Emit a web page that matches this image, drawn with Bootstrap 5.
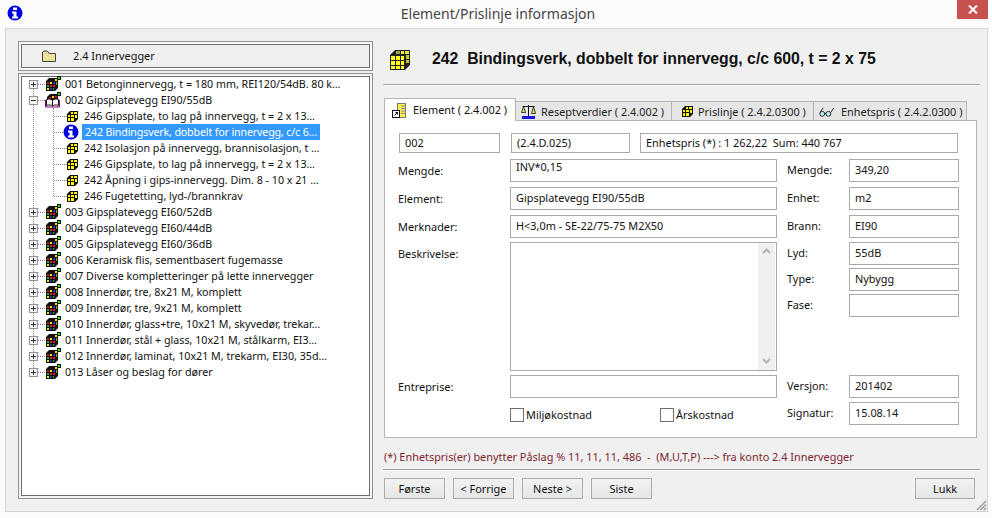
<!DOCTYPE html>
<html lang="no">
<head>
    <meta charset="UTF-8">
    <title>Element/Prislinje informasjon</title>
    <link href="https://cdn.jsdelivr.net/npm/bootstrap@5.3.0/dist/css/bootstrap.min.css" rel="stylesheet">
    <style>
        html, body { height: 518px; overflow: hidden; }
        body { background: #fcfcfc; font-family: "Noto Sans", "DejaVu Sans", sans-serif; font-size: 10.9px; line-height: 16px; color: #111; }

        /* title bar */
        .titlebar { height: 28px; padding-left: 7px; }
        .titlebar-icon { margin-top: -2px; }
        .titlebar-text { flex: 1; text-align: center; font-size: 14px; color: #444; padding-left: 16px; }
        .close-x { width: 31px; height: 19px; background: #c75050; margin-right: 4px; align-self: flex-start; }

        .window-body { margin: 0 4px 0 5px; height: 484px; background: #f0f0f0; border: 1px solid #d4d4d4; padding: 12px 6px 0 12px; }

        /* left column */
        .left-col { width: 355px; margin-right: 10px; }
        .group-head { height: 30px; border: 1px solid #909090; box-shadow: inset 0 0 0 2px #fafafa, inset 0 0 0 3px #6e6e6e; padding-left: 23px; margin-bottom: 2px; }
        .group-head span { margin-left: 17px; }
        .tree-box { height: 426px; background: #fff; border: 1px solid #909090; box-shadow: inset 0 0 0 2px #f4f4f4, inset 0 0 0 3px #6e6e6e; padding: 2px 0 0 10px; font-size: 10.7px; }
        .tree-list, .tree-sub { list-style: none; margin: 0; padding: 0; position: relative; }
        .tree-list::before { content: ""; position: absolute; left: 4px; top: 8px; height: 288px; border-left: 1px dotted #888; }
        .tree-sub::before { content: ""; position: absolute; left: 24px; top: 0; height: 88px; border-left: 1px dotted #888; }
        .tree-row { height: 16px; white-space: nowrap; }
        .expander { width: 9px; height: 9px; background: #f4f4f4; border: 1px solid #919191; position: relative; z-index: 1; flex: none; }
        .expander::before { content: ""; position: absolute; left: 1px; top: 3px; width: 5px; height: 1px; background: #333; }
        .expander.closed::after { content: ""; position: absolute; left: 3px; top: 1px; width: 1px; height: 5px; background: #333; }
        .connector { width: 7px; border-top: 1px dotted #888; flex: none; }
        .connector.sub { width: 13px; margin-left: 25px; }
        .node-icon { width: 17px; height: 16px; flex: none; }
        .sub-icon { width: 11px; height: 11px; flex: none; margin-right: 6px; }
        .info-icon { width: 16px; height: 16px; flex: none; margin: 0 3px 0 -4px; position: relative; z-index: 1; }
        .node-label { margin-left: 3px; }
        .selected-label { background: #3399ff; color: #fff; padding-left: 3px; width: 238px; letter-spacing: -0.16px; }

        /* right column */
        .right-col { width: 597px; }
        .head-icon { width: 20px; height: 20px; margin: 0 22px 0 7px; flex: none; }
        .head-title { height: 43px; padding-bottom: 6px; }
        .head-title h1 { font-family: "Liberation Sans", Arial, sans-serif; font-weight: 700; font-size: 15.8px; margin: 0; color: #111; white-space: pre; }
        .rule { border-top: 1px solid #a0a0a0; border-bottom: 1px solid #fff; height: 2px; }

        .tab-strip { margin: 11px 0 0 1px; border: 0; height: 23px; align-items: flex-end; flex-wrap: nowrap; }
        .tab-strip .nav-link { height: 19px; padding: 1px 0 0 5px; border: 1px solid #b4b4b4; border-bottom: 0; border-radius: 0; background: #e6e6e6; color: #222; font-size: 10.9px; line-height: 18px; white-space: pre; display: flex; align-items: center; margin: 0 -1px 0 0; }
        .tab-strip .nav-link.active { height: 23px; padding-top: 0; background: #fff; color: #111; position: relative; z-index: 2; margin-bottom: -1px; border-color: #b4b4b4; }
        .tab-icon { width: 15px; height: 15px; margin-right: 6px; flex: none; }
        .tab-cube { width: 11px; height: 11px; margin-right: 5px; flex: none; }
        .tab-one { width: 132px; padding-left: 7px !important; }
        .tab-two { width: 157px; }
        .tab-two .tab-icon { margin-right: 5px; }
        .tab-three { width: 143px; padding-left: 10px !important; }
        .tab-four { width: 154px; }
        .tab-four .tab-icon { margin-right: 7px; }

        .tab-body { width: 593px; height: 318px; margin-left: 1px; background: #fff; border: 1px solid #b4b4b4; padding: 12px 16px 0 14px; }
        .field { border: 1px solid #a9a9a9; background: #fff; border-radius: 0; padding: 0 0 0 5px; height: 23px; font-size: 10.9px; line-height: 20px; color: #111; }
        .memo-line { line-height: 13px; }
        .top-row { display: flex; margin-bottom: 5px; height: 21px; }
        .top-row .field { height: 20px; line-height: 18px; }
        .top-one { width: 101px; margin-right: 11px; }
        .top-two { width: 119px; margin-right: 10px; }
        .top-three { width: 318px; }

        .form-area { display: grid; grid-template-columns: 111px 267px 10px 62px 110px; grid-auto-rows: min-content; row-gap: 5px; }
        .form-label-text { margin: 0; padding-top: 3px; white-space: nowrap; }
        .left-label { margin-left: -1px; padding-top: 4px; }
        .lift { margin-top: -1px; }
        .desc-field { height: 129px; display: flex; justify-content: flex-end; padding: 0; }
        .fake-scroll { width: 17px; margin: 0 1px 0 0; background: #f0f0f0; display: flex; flex-direction: column; justify-content: space-between; align-items: center; padding: 5px 0 6px; }
        .side-stack { display: flex; flex-direction: column; gap: 3px; }
        .side-stack .side-cell { height: 23px; margin: 0; }
        .check-line { padding-top: 2px; }
        .check-text { width: 134px; }
        .form-check-input[type=checkbox].check-box { width: 14px; height: 14px; border: 1px solid #707070; background: #fff; border-radius: 0; margin: 0 2px 0 0; flex: none; }

        .note-text { color: #7f1f2f; margin: 11px 0 4px 1px; height: 16px; }
        .foot-row { margin: 7px 5px 0 1px; gap: 8px; }
        .win-btn { width: 61px; height: 21px; padding: 0; font-size: 10.9px; line-height: 18px; border: 1px solid #adadad; border-radius: 0; background: linear-gradient(#f2f2f2, #e6e6e6); color: #111; }
        .close-btn { width: 60px; }
        .grip { position: absolute; right: 5px; bottom: 7px; width: 11px; height: 11px; }
    </style>
</head>
<body>
    <svg width="0" height="0" class="position-absolute">
        <defs>
            <symbol id="cube" viewBox="0 0 11 11">
                <path d="M0 3 L3 0 H11 V8 L8 11 H0 Z" fill="#111"/>
                <path d="M1 4h2v2H1zM4 4h3v2H4zM1 7h2v3H1zM4 7h3v3H4z" fill="#ffff00"/>
                <path d="M4 1h2v2H4zM7 1h3v2H7zM8 4h2v3H8z" fill="#ffff00"/>
            </symbol>
            <symbol id="bigcube" viewBox="0 0 20 20">
                <path d="M0 5 L5 0 H20 V15 L15 20 H0 Z" fill="#222"/>
                <path d="M6 1h4v3H6z" fill="#a0a040"/>
                <path d="M11 1h3v3h-3zM15 1h4v3h-4z" fill="#e8e830"/>
                <path d="M1 6h4v4H1zM6 6h4v4H6zM11 6h3v4h-3zM1 11h4v4H1zM6 11h4v4H6zM11 11h3v4h-3zM1 16h4v3H1zM6 16h4v3H6zM11 16h3v3h-3z" fill="#ffff20"/>
                <path d="M16 5h3v4h-3zM16 10h3v3h-3z" fill="#c8c828"/>
            </symbol>
            <symbol id="colorcube" viewBox="0 0 17 16">
                <path d="M1 5 L4 2 H13 V12 L10 15 H1 Z" fill="#111"/>
                <path d="M2 6h2v2H2zM8 9h2v2H8z" fill="#e01010"/>
                <path d="M5 6h2v2H5zM2 12h2v2H2zM10 3h2v2h-2z" fill="#ffe000"/>
                <path d="M2 9h2v2H2zM8 12h1v2H8z" fill="#10b010"/>
                <path d="M5 9h2v2H5z" fill="#e01010"/>
                <path d="M5 12h2v2H5zM8 6h2v2H8z" fill="#1030d0"/>
                <path d="M11 6h1v3h-1z" fill="#a0a000"/>
                <rect x="12" y="0" width="4" height="4" fill="#111"/><rect x="13" y="1" width="2" height="2" fill="#20e020"/>
            </symbol>
            <symbol id="bookcube" viewBox="0 0 17 16">
                <path d="M2 5 L5 2 H13 V9 H2 Z" fill="#111"/>
                <path d="M4 5h2v2H4z" fill="#e01010"/><path d="M7 4h2v2H7z" fill="#ffe000"/><path d="M10 4h2v2h-2z" fill="#e01010"/>
                <rect x="12" y="0" width="4" height="4" fill="#111"/><rect x="13" y="1" width="2" height="2" fill="#20e020"/>
                <path d="M1.500 7.500C4 6.500 6 7 7.500 8.500V14C6 12.800 4 12.500 1.500 13.500Z" fill="#fff" stroke="#111"/>
                <path d="M13.500 7.500C11 6.500 9 7 7.500 8.500V14C9 12.800 11 12.500 13.500 13.500Z" fill="#fff" stroke="#111"/>
                <path d="M0.500 8V15H14.500V8" fill="none" stroke="#800080"/>
            </symbol>
            <symbol id="info" viewBox="0 0 16 16">
                <circle cx="8" cy="8" r="7.500" fill="#0000e0"/>
                <path d="M6 2.500h4V5H6zM5 6.500h4.500v5H11V13.500H5v-2h1.500V8.500H5z" fill="#fff"/>
            </symbol>
            <symbol id="folder" viewBox="0 0 14 12">
                <path d="M0.500 2V11.500H13.500V3.500H7L5.500 1H2Z" fill="#ece39a" stroke="#444"/>
            </symbol>
            <symbol id="doc" viewBox="0 0 15 15">
                <rect x="5.500" y="0.500" width="8" height="14" fill="#ffef50" stroke="#777"/>
                <path d="M9 3h4M9 5.500h4M9 8h4M9 10.500h4" stroke="#888"/>
                <rect x="0.500" y="7.500" width="7" height="7" fill="#fff" stroke="#111"/>
                <path d="M2.500 12.500L5.500 9.500M3.500 9.500h2v2" stroke="#111" fill="none"/>
            </symbol>
            <symbol id="scale" viewBox="0 0 15 15">
                <path d="M7.500 1V12M1.500 2.500H13.500" stroke="#111" fill="none"/>
                <path d="M2.500 2.500L0.500 8.500H4.500ZM12.500 2.500L10.500 9.500H14.500Z" fill="#e6e85a" stroke="#111" stroke-width="0.800"/>
                <path d="M1 12h13v3H1z" fill="#1a1ae0"/>
            </symbol>
            <symbol id="glasses" viewBox="0 0 16 15">
                <circle cx="3.500" cy="10" r="2.600" fill="#bfeff0" stroke="#222"/>
                <circle cx="10" cy="10" r="2.600" fill="#bfeff0" stroke="#222"/>
                <path d="M6 9.500H7.500M1 8.500L4.500 3.500M12.500 8.500L15.500 4" stroke="#222" fill="none"/>
            </symbol>
        </defs>
    </svg>

    <div class="titlebar d-flex align-items-center">
        <svg width="16" height="16" class="titlebar-icon"><use href="#info"/></svg>
        <div class="titlebar-text">Element/Prislinje informasjon</div>
        <div class="close-x d-flex align-items-center justify-content-center">
            <svg width="10" height="9" viewBox="0 0 10 9"><path d="M1 0.500L9 8.500M9 0.500L1 8.500" stroke="#fff" stroke-width="2"/></svg>
        </div>
    </div>

    <div class="window-body d-flex">
        <!-- Tree -->
        <div class="left-col">
            <div class="group-head d-flex align-items-center">
                <svg width="14" height="12"><use href="#folder"/></svg>
                <span>2.4 Innervegger</span>
            </div>
            <div class="tree-box">
                <ul class="tree-list" id="tree"></ul>
            </div>
        </div>

        <!-- Detail -->
        <div class="right-col">
            <div class="head-title d-flex align-items-center">
                <svg class="head-icon"><use href="#bigcube"/></svg>
                <h1>242  Bindingsverk, dobbelt for innervegg, c/c 600, t = 2 x 75</h1>
            </div>
            <div class="rule"></div>

            <ul class="nav nav-tabs tab-strip">
                <li class="nav-item"><a class="nav-link active tab-one" href="#"><svg class="tab-icon"><use href="#doc"/></svg>Element ( 2.4.002 )</a></li>
                <li class="nav-item"><a class="nav-link tab-two" href="#"><svg class="tab-icon"><use href="#scale"/></svg>Reseptverdier ( 2.4.002 )</a></li>
                <li class="nav-item"><a class="nav-link tab-three" href="#"><svg class="tab-cube"><use href="#cube"/></svg>Prislinje ( 2.4.2.0300 )</a></li>
                <li class="nav-item"><a class="nav-link tab-four" href="#"><svg class="tab-icon"><use href="#glasses"/></svg>Enhetspris ( 2.4.2.0300 )</a></li>
            </ul>

            <div class="tab-body">
                <div class="top-row">
                    <div class="field top-one">002</div>
                    <div class="field top-two">(2.4.D.025)</div>
                    <div class="field top-three">Enhetspris (*) : 1 262,22&nbsp; Sum: 440 767</div>
                </div>
                <div class="form-area">
                    <p class="form-label-text left-label">Mengde:</p>
                    <div class="field memo-line">INV*0,15</div>
                    <span></span>
                    <p class="form-label-text">Mengde:</p>
                    <div class="field">349,20</div>

                    <p class="form-label-text left-label">Element:</p>
                    <div class="field">Gipsplatevegg EI90/55dB</div>
                    <span></span>
                    <p class="form-label-text">Enhet:</p>
                    <div class="field">m2</div>

                    <p class="form-label-text left-label">Merknader:</p>
                    <div class="field">H&lt;3,0m - SE-22/75-75 M2X50</div>
                    <span></span>
                    <p class="form-label-text">Brann:</p>
                    <div class="field">EI90</div>

                    <p class="form-label-text left-label lift">Beskrivelse:</p>
                    <div class="field desc-field lift">
                        <div class="fake-scroll">
                            <svg width="9" height="6" viewBox="0 0 9 6"><path d="M1 5L4.500 1.500L8 5" fill="none" stroke="#b4b4b4" stroke-width="2"/></svg>
                            <svg width="9" height="6" viewBox="0 0 9 6"><path d="M1 1L4.500 4.500L8 1" fill="none" stroke="#b4b4b4" stroke-width="2"/></svg>
                        </div>
                    </div>
                    <span></span>
                    <div class="side-stack lift">
                        <p class="form-label-text side-cell">Lyd:</p>
                        <p class="form-label-text side-cell">Type:</p>
                        <p class="form-label-text side-cell">Fase:</p>
                    </div>
                    <div class="side-stack lift">
                        <div class="field side-cell">55dB</div>
                        <div class="field side-cell">Nybygg</div>
                        <div class="field side-cell"></div>
                    </div>

                    <p class="form-label-text left-label lift">Entreprise:</p>
                    <div class="field lift"></div>
                    <span></span>
                    <p class="form-label-text lift">Versjon:</p>
                    <div class="field lift">201402</div>

                    <span></span>
                    <div class="d-flex align-items-center check-line lift">
                        <input type="checkbox" class="form-check-input check-box"><span class="check-text">Miljøkostnad</span>
                        <input type="checkbox" class="form-check-input check-box"><span>Årskostnad</span>
                    </div>
                    <span></span>
                    <p class="form-label-text lift">Signatur:</p>
                    <div class="field lift">15.08.14</div>
                </div>
            </div>

            <div class="note-text">(*) Enhetspris(er) benytter Påslag % 11, 11, 11, 486&nbsp; -&nbsp; (M,U,T,P) ---&gt; fra konto 2.4 Innervegger</div>
            <div class="rule"></div>
            <div class="foot-row d-flex">
                <button class="btn win-btn">Første</button>
                <button class="btn win-btn">&lt; Forrige</button>
                <button class="btn win-btn">Neste &gt;</button>
                <button class="btn win-btn">Siste</button>
                <button class="btn win-btn close-btn ms-auto">Lukk</button>
            </div>
        </div>
    </div>
    <svg class="grip" viewBox="0 0 11 11"><path d="M10 1L1 10M10 4.500L4.500 10M10 8L8 10" stroke="#a0a0a0" stroke-width="1.500" fill="none"/></svg>

    <script>
        // tree data
        const children = [
            "246 Gipsplate, to lag på innervegg, t = 2 x 13…",
            "242 Bindingsverk, dobbelt for innervegg, c/c 6…",
            "242 Isolasjon på innervegg, brannisolasjon, t …",
            "246 Gipsplate, to lag på innervegg, t = 2 x 13…",
            "242 Åpning i gips-innervegg. Dim. 8 - 10 x 21 …",
            "246 Fugetetting, lyd-/brannkrav"
        ];
        const groups = [
            "001 Betonginnervegg, t = 180 mm, REI120/54dB. 80 k…",
            "002 Gipsplatevegg EI90/55dB",
            "003 Gipsplatevegg EI60/52dB",
            "004 Gipsplatevegg EI60/44dB",
            "005 Gipsplatevegg EI60/36dB",
            "006 Keramisk flis, sementbasert fugemasse",
            "007 Diverse kompletteringer på lette innervegger",
            "008 Innerdør, tre, 8x21 M, komplett",
            "009 Innerdør, tre, 9x21 M, komplett",
            "010 Innerdør, glass+tre, 10x21 M, skyvedør, trekar…",
            "011 Innerdør, stål + glass, 10x21 M, stålkarm, EI3…",
            "012 Innerdør, laminat, 10x21 M, trekarm, EI30, 35d…",
            "013 Låser og beslag for dører"
        ];

        let treeHtml = "";
        groups.forEach((g, i) => {
            const open = i === 1;
            treeHtml += `<li><div class="tree-row d-flex align-items-center">
                <span class="expander ${open ? "" : "closed"}"></span><span class="connector"></span>
                <svg class="node-icon"><use href="#${open ? "bookcube" : "colorcube"}"/></svg>
                <span class="node-label">${g}</span></div>`;
            if (open) {
                treeHtml += `<ul class="tree-sub">`;
                children.forEach((c, j) => {
                    const selected = j === 1;
                    treeHtml += `<li class="tree-row d-flex align-items-center"><span class="connector sub"></span>
                        ${selected ? `<svg class="info-icon"><use href="#info"/></svg><span class="selected-label">${c}</span>`
                                   : `<svg class="sub-icon"><use href="#cube"/></svg><span>${c}</span>`}</li>`;
                });
                treeHtml += `</ul>`;
            }
            treeHtml += `</li>`;
        });
        document.getElementById("tree").innerHTML = treeHtml;
    </script>
    <script src="https://cdn.jsdelivr.net/npm/bootstrap@5.3.0/dist/js/bootstrap.bundle.min.js"></script>
</body>
</html>
